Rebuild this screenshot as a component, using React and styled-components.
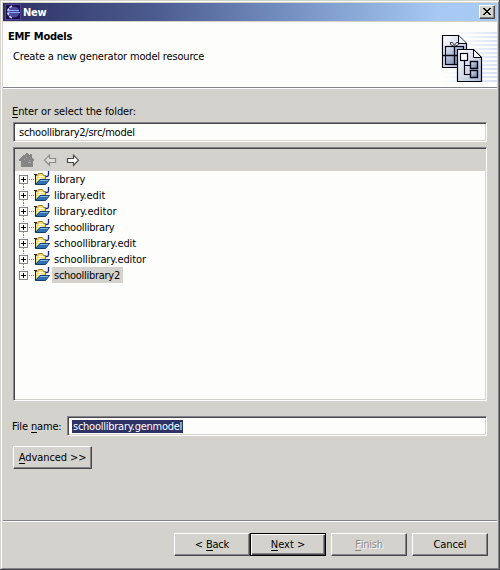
import React from 'react';
import styled, { createGlobalStyle, css } from 'styled-components';

const FACE = '#d3d2cd';

const Global = createGlobalStyle`
  * { box-sizing: border-box; }
  body { margin: 0; overflow: hidden; }
  button { margin: 0; padding: 0; color: inherit; font: inherit; }
`;

const Window = styled.div`
  width: 500px;
  height: 570px;
  padding: 1px 0 0 1px;
  background: ${FACE};
  border-right: 1px solid #48474c;
  border-bottom: 1px solid #48474c;
  font: 11px/14px "DejaVu Sans Condensed", "DejaVu Sans", sans-serif;
  font-stretch: condensed;
  color: #000;
`;

const Frame = styled.div`
  height: 568px;
  display: flex;
  flex-direction: column;
  padding: 1px 1px 0 1px;
  border: 1px solid #fff;
  border-right-color: #85838a;
  border-bottom-color: #85838a;
`;

const Text = styled.span`
  white-space: pre;
  letter-spacing: ${p => p.$ls || 0}px;
`;

const TitleBar = styled.header`
  flex: none;
  height: 18px;
  display: flex;
  align-items: center;
  padding: 0 2px;
  background: linear-gradient(90deg, #2d3164 0%, #4b5a8e 30%, #7590c2 58%, #a6c8f2 88%, #a8cbf4 100%);
  color: #fff;
  font-weight: bold;
  svg { flex: none; margin-right: 2px; }
`;

const Title = styled(Text)`
  padding-top: 1px;
`;

const CloseButton = styled.button`
  width: 16px;
  height: 14px;
  margin-left: auto;
  background: ${FACE};
  border: 1px solid #fff;
  border-right-color: #48474c;
  border-bottom-color: #48474c;
  box-shadow: inset -1px -1px #85838a;
  display: flex;
  svg { margin: 2px 0 0 3px; }
`;

const Banner = styled.section`
  flex: none;
  height: 68px;
  display: flex;
  justify-content: space-between;
  border-top: 1px solid ${FACE};
  border-bottom: 1px solid #fff;
  box-shadow: inset 0 -1px #85838a;
  background: #fdfefc;
`;

const BannerText = styled.div`
  display: flex;
  flex-direction: column;
  gap: 6px;
  padding: 8px 0 0 5px;
`;

const Heading = styled(Text)`
  font-weight: bold;
`;

const Description = styled(Text)`
  padding-left: 5px;
`;

const Body = styled.main`
  flex: none;
  height: 432px;
  display: flex;
  flex-direction: column;
  padding: 16px 10px 0;
  border-bottom: 1px solid #85838a;
`;

const Label = styled(Text)`
  margin-left: -1px;
`;

const sunken = css`
  border: 1px solid #85838a;
  border-right-color: #fff;
  border-bottom-color: #fff;
  box-shadow: inset 1px 1px #48474c, inset -1px -1px ${FACE};
`;

const Field = styled.div`
  ${sunken}
  flex: ${p => (p.$grow ? 1 : 'none')};
  height: 20px;
  padding: 2px 4px;
  background: #fdfefc;
  display: flex;
  align-items: center;
`;

const FolderField = styled(Field)`
  margin-top: 3px;
  padding: 3px 5px 1px;
`;

const Selection = styled(Text)`
  height: 13px;
  line-height: 14px;
  background: #2f3264;
  color: #fff;
  padding: 0 1px;
`;

const TreePane = styled.div`
  ${sunken}
  height: 254px;
  margin-top: 5px;
  padding: 1px;
  background: #fdfefc;
`;

const ToolStrip = styled.div`
  height: 22px;
  display: flex;
  align-items: center;
  gap: 7px;
  padding: 0 0 0 4px;
  background: ${FACE};
`;

const Row = styled.div`
  height: 16px;
  display: flex;
  align-items: center;
  padding-left: 4px;
`;

const RowLabel = styled(Text)`
  height: 16px;
  line-height: 17px;
  margin-left: 2px;
  padding: 0 3px 0 2px;
  background: ${p => (p.$on ? FACE : 'transparent')};
`;

const NameRow = styled.div`
  display: flex;
  align-items: center;
  margin-top: 15px;
`;

const NameLabel = styled(Text)`
  width: 55px;
  margin-left: -1px;
  padding-top: 2px;
`;

const Button = styled.button`
  width: ${p => p.$w || 76}px;
  height: 23px;
  background: ${FACE};
  border: 1px solid #fff;
  border-right-color: #48474c;
  border-bottom-color: #48474c;
  box-shadow: inset -1px -1px #85838a;
  line-height: 14px;
  white-space: pre;
  ${p => p.$default && css`
    border: 1px solid #000;
    box-shadow: inset 1px 1px #fff, inset -1px -1px #48474c, inset -2px -2px #85838a;
  `}
  ${p => p.disabled && css`
    color: #8b8986;
    text-shadow: 1px 1px #fff;
  `}
`;

const AdvancedButton = styled(Button)`
  margin-top: 10px;
`;

const Footer = styled.footer`
  flex: 1;
  display: flex;
  justify-content: flex-end;
  border-top: 1px solid #fff;
  padding: 11px 9px 0 0;
`;

const Steps = styled.div`
  display: flex;
  margin-right: 5px;
`;

const FinishButton = styled(Button)`
  margin-right: 5px;
`;

const Key = styled.span`
  border-bottom: 1px solid currentColor;
  display: inline-block;
  height: 13px;
  line-height: 14px;
`;

const EclipseIcon = () => (
  <svg width="16" height="16" viewBox="0 0 16 16">
    <rect width="16" height="16" fill="#171044" />
    <rect x=".5" y=".5" width="15" height="15" fill="none" stroke="#5a439b" />
    <circle cx="9" cy="8" r="5.5" fill="#4a489c" />
    <path d="M7 2C1.5 4.500 1.500 11.500 7 14" fill="none" stroke="#d6ccf4" strokeWidth="1.700" strokeDasharray="3 1" />
    <path d="M4 6.500h10M3 8.500h12" stroke="#86a8f2" />
  </svg>
);

const Close = () => (
  <svg width="8" height="7" shapeRendering="crispEdges">
    <path d="M0 0h2v1h1v1h2v-1h1v-1h2v1h-1v1h-1v1h-1v1h1v1h1v1h1v1h-2v-1h-1v-1h-2v1h-1v1h-2v-1h1v-1h1v-1h1v-1h-1v-1h-1v-1h-1z" />
  </svg>
);

const BannerArt = () => (
  <svg width="60" height="65" viewBox="437 22 60 65">
    <defs>
      <linearGradient id="stripe"><stop offset="0" stopColor="#dfe6f7" stopOpacity="0" /><stop offset="1" stopColor="#d6e0f5" /></linearGradient>
      <linearGradient id="paper" x1="0" y1="0" x2="1" y2="1"><stop offset="0" stopColor="#fff" /><stop offset="1" stopColor="#a9b9d6" /></linearGradient>
      <linearGradient id="box" x1="0" y1="0" x2="1" y2="1"><stop offset="0" stopColor="#e6ecf6" /><stop offset="1" stopColor="#5a719e" /></linearGradient>
    </defs>
    {[32, 36, 40, 44, 48, 52, 56, 60, 64, 68, 72, 76, 80].map(y => (
      <rect key={y} x={y > 66 ? 440 : 456} y={y} width={y > 66 ? 57 : 41} height="2" fill="url(#stripe)" />
    ))}
    <path d="M442.500 35.500h16l8 8v24h-24z" fill="url(#paper)" stroke="#000010" strokeWidth="1.200" />
    <path d="M458.500 35.500v8h8" fill="#eef2fa" stroke="#000010" />
    <rect x="445.500" y="46.500" width="18" height="18" fill="url(#box)" stroke="#000010" strokeWidth="1.200" />
    <path d="M454.500 46v19M442 55.500h24" stroke="#000010" strokeWidth="1.300" />
    <path d="M454.500 46.500l-4-2v-2h2l2 3 2-3h2v2z" fill="#fff" stroke="#000010" strokeWidth=".8" />
    <path d="M457.500 49.500h16l8 8v24h-24z" fill="url(#paper)" stroke="#000010" strokeWidth="1.200" />
    <path d="M473.500 49.500v8h8z" fill="#f4f6fc" stroke="#000010" />
    <path d="M464.500 60v14.500h6M464.500 65.500h6" fill="none" stroke="#000010" strokeWidth="1.200" />
    <rect x="460.500" y="53.500" width="7" height="7" fill="#fff" stroke="#000010" strokeWidth="1.200" />
    <rect x="470.500" y="61.500" width="7" height="7" fill="url(#box)" stroke="#000010" strokeWidth="1.400" />
    <rect x="470.500" y="70.500" width="7" height="7" fill="url(#box)" stroke="#000010" strokeWidth="1.400" />
  </svg>
);

const HomeIcon = () => (
  <svg width="16" height="16" viewBox="0 0 16 16" shapeRendering="crispEdges">
    <path d="M7 1h2v1h1v1h1V2h2v4h1v1h1v2h-1v6H2V9H0V7h1V6h1V5h1V4h1V3h2V2h1z" fill="#858585" />
    <path d="M5 7h1v1h-1zM7 5h1v1h-1zM10 8h1v1h-1zM9 10h3v1h-3z" fill="#aaa" />
  </svg>
);

const Arrow = ({ right }) => (
  <svg width="16" height="16" viewBox="0 0 16 16">
    {right
      ? <path d="M2.500 6.500h6V3.200l5 5-5 5V10.500h-6z" fill="#fff" stroke="#4c4c4c" strokeWidth="1.200" />
      : <path d="M13.500 6.500h-6V3.200l-5 5 5 5V10.500h6z" fill="#dddcd8" stroke="#8c8c8c" strokeWidth="1.200" />}
  </svg>
);

const Expander = ({ first, last }) => (
  <svg width="15" height="16" shapeRendering="crispEdges">
    {!first && <path d="M4.500 0v4" stroke="#85838a" strokeDasharray="1 1" />}
    {!last && <path d="M4.500 13v3" stroke="#85838a" strokeDasharray="1 1" />}
    <path d="M10 8.500h5" stroke="#85838a" strokeDasharray="1 1" />
    <rect x=".5" y="4.500" width="8" height="8" fill="#fff" stroke="#85838a" />
    <path d="M2 8.500h5M4.500 6v5" stroke="#000" />
  </svg>
);

const FolderIcon = () => (
  <svg width="16" height="16" viewBox="0 0 16 16">
    <path d="M1.500 13V4.500h2l1-2h4l1 2h2V9" fill="#f5dd7c" stroke="#94802f" />
    <path d="M0 3h3v1H0zM1 4h1v9H1z" fill="#26230f" />
    <path d="M4.500 5.500h5M3.500 7.500h4M3 9.500h2" stroke="#fffce0" />
    <path d="M1.500 13.500L6 8.500h9.500l-4 5z" fill="#2f6fb8" stroke="#123a68" />
    <path d="M6 9.500h8" stroke="#83b7e7" />
    <path d="M14.500 0v3.500q0 2-1.500 2h-1.500" fill="none" stroke="#10209c" strokeWidth="1.300" />
  </svg>
);

const FOLDERS = [
  ['library', -0.1], ['library.edit', -0.1], ['library.editor', 0], ['schoollibrary', -0.25],
  ['schoollibrary.edit', -0.12], ['schoollibrary.editor', -0.12], ['schoollibrary2', -0.28],
];

export default function App() {
  return (
    <>
      <Global />
      <Window>
        <Frame>
          <TitleBar>
            <EclipseIcon />
            <Title $ls={-0.3}>New</Title>
            <CloseButton aria-label="Close"><Close /></CloseButton>
          </TitleBar>
          <Banner>
            <BannerText>
              <Heading $ls={-0.25}>EMF Models</Heading>
              <Description $ls={-0.17}>Create a new generator model resource</Description>
            </BannerText>
            <BannerArt />
          </Banner>
          <Body>
            <Label $ls={-0.1}><Key>E</Key>nter or select the folder:</Label>
            <FolderField><Text $ls={-0.25}>schoollibrary2/src/model</Text></FolderField>
            <TreePane>
              <ToolStrip><HomeIcon /><Arrow /><Arrow right /></ToolStrip>
              {FOLDERS.map(([name, ls], i) => (
                <Row key={name}>
                  <Expander first={i === 0} last={i === FOLDERS.length - 1} />
                  <FolderIcon />
                  <RowLabel $ls={ls} $on={i === FOLDERS.length - 1}>{name}</RowLabel>
                </Row>
              ))}
            </TreePane>
            <NameRow>
              <NameLabel $ls={-0.15}>File <Key>n</Key>ame:</NameLabel>
              <Field $grow><Selection $ls={-0.25}>schoollibrary.genmodel</Selection></Field>
            </NameRow>
            <AdvancedButton $w={79}><Text $ls={-0.1}><Key>A</Key>dvanced &gt;&gt;</Text></AdvancedButton>
          </Body>
          <Footer>
            <Steps>
              <Button><Text $ls={-0.2}>&lt; <Key>B</Key>ack</Text></Button>
              <Button $default><Text><Key>N</Key>ext &gt;</Text></Button>
            </Steps>
            <FinishButton disabled><Text $ls={-0.2}><Key>F</Key>inish</Text></FinishButton>
            <Button><Text $ls={-0.1}>Cancel</Text></Button>
          </Footer>
        </Frame>
      </Window>
    </>
  );
}
